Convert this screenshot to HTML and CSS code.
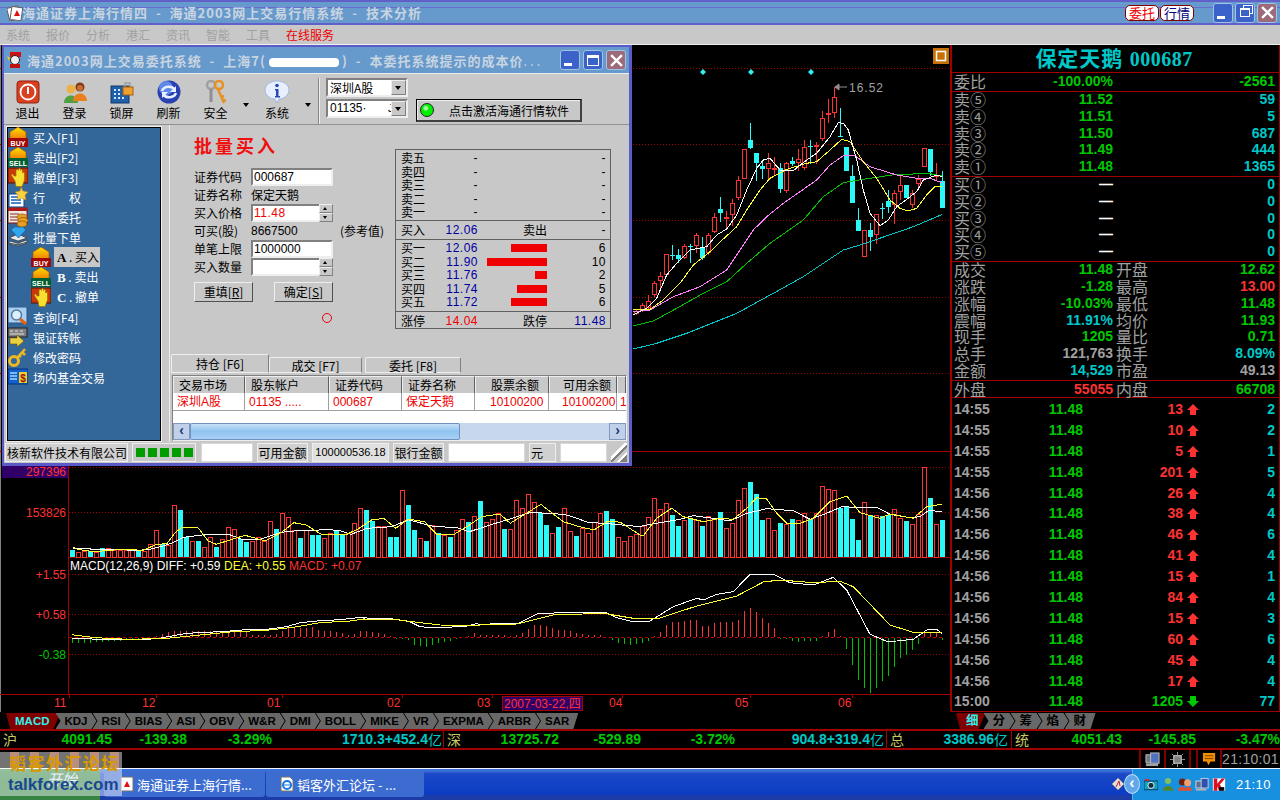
FILE: index.html
```html
<!DOCTYPE html>
<html lang="zh">
<head>
<meta charset="utf-8">
<title>海通证券上海行情四</title>
<link rel="stylesheet" href="styles.css">
</head>
<body>
<svg class="defs" width="0" height="0">
  <defs>
    <symbol id="ar-up" viewBox="0 0 12 11"><path d="M6 0L12 6H9V11H3V6H0z"/></symbol>
    <symbol id="ar-dn" viewBox="0 0 12 11"><path d="M6 11L12 5H9V0H3V5H0z"/></symbol>
    <linearGradient id="gold" x1="0" y1="0" x2="0" y2="1"><stop offset="0" stop-color="#ffe000"/><stop offset="1" stop-color="#f07800"/></linearGradient>
    <symbol id="i-buy" viewBox="0 0 20 20"><path d="M10 0L18 5V13H2V5z" fill="url(#gold)" stroke="#a05000" stroke-width=".6"/><rect y="11" width="20" height="9" fill="#a00808"/><text x="10" y="18.6" class="ictext">BUY</text></symbol>
    <symbol id="i-sell" viewBox="0 0 20 20"><path d="M10 0L18 5V13H2V5z" fill="url(#gold)" stroke="#a05000" stroke-width=".6"/><rect y="11" width="20" height="9" fill="#006030"/><text x="10" y="18.6" class="ictext">SELL</text></symbol>
    <symbol id="i-hand" viewBox="0 0 20 20"><rect y="1" width="20" height="15" fill="#c83808" stroke="#501000"/><path d="M6 9C5 6.500 3 6.500 3.500 8.500L7 14L8 19.500H14L16.500 13V6C16.500 5 14.500 5 14.500 6V3.500C14.500 2 12.500 2 12.500 3.500V2.500C12.500 1 10.500 1 10.500 2.500V3.500C10.500 2 8 2 8 3.500V9z" fill="#f8e030" stroke="#a07000" stroke-width=".7"/></symbol>
    <symbol id="i-star" viewBox="0 0 20 20"><rect x="1" y="7" width="15" height="13" fill="#fff" stroke="#104090"/><path d="M3 10h8M3 13h10M3 16h10" stroke="#1060c0" stroke-width="1.500"/><path d="M13 0l2 4 5 1-3 3 1 5-5-2-4 2 1-5-3-3 5-1z" fill="#f8d040" stroke="#c08000" stroke-width=".5"/></symbol>
    <symbol id="i-mkt" viewBox="0 0 20 20"><rect y="1" width="19" height="15" fill="#f0e8e0" stroke="#801010"/><rect y="1" width="19" height="3" fill="#b01818"/><path d="M2 7h9M2 10h7M2 13h8" stroke="#803020"/><ellipse cx="14" cy="10" rx="5" ry="3" fill="#e8a020" stroke="#905000" stroke-width=".7"/><ellipse cx="15" cy="13.500" rx="5" ry="3" fill="#e8a020" stroke="#905000" stroke-width=".7"/><ellipse cx="14" cy="17" rx="5" ry="3" fill="#e8a020" stroke="#905000" stroke-width=".7"/></symbol>
    <symbol id="i-batch" viewBox="0 0 20 20"><path d="M1 11l9-4 9 4-9 3zM1 14l9 2 9-3v2l-9 3-9-2zM1 17l9 2 9-3" fill="#e8e8e8" stroke="#303030" stroke-width=".7"/><path d="M6 0h9l3 3-7.500 8L3 3z" fill="#30a8f0" stroke="#0848a0" stroke-width=".6"/></symbol>
    <symbol id="i-find" viewBox="0 0 20 20"><rect width="19" height="16" fill="#a8d0f0" stroke="#305080"/><circle cx="8.500" cy="8" r="5" fill="#d8f0ff" stroke="#5878a0" stroke-width="1.500"/><path d="M12 12l6 5" stroke="#e86010" stroke-width="3"/></symbol>
    <symbol id="i-bank" viewBox="0 0 20 20"><rect y="1" width="19" height="9" fill="#808080" stroke="#202020"/><path d="M2 4h3M7 4h3M12 4h3M2 7h14" stroke="#e0e0e0"/><path d="M2 11h7V8l7 6-7 6v-3H2z" fill="#e8d040" stroke="#705000" stroke-width=".6"/></symbol>
    <symbol id="i-key" viewBox="0 0 20 20"><circle cx="6" cy="14" r="4.500" fill="none" stroke="#f0b820" stroke-width="3"/><path d="M9 11l8-9M14 5l3 3M11 8l2 2" stroke="#f0b820" stroke-width="2.500" fill="none"/></symbol>
    <symbol id="i-fund" viewBox="0 0 20 20"><rect y="2" width="20" height="15" fill="#1060d0" stroke="#083080"/><path d="M2 6h7M2 9h7M2 12h7" stroke="#a0d8ff" stroke-width="1.500"/><rect x="11" y="5" width="8" height="11" fill="#f0d020"/><text x="15" y="14.500" class="ictext2">$</text></symbol>
  </defs>
</svg>

<header class="titlebar">
  <svg class="appicon" viewBox="0 0 16 16"><rect x="1" y="2" width="11" height="13" rx="1" transform="rotate(-14 6 8)" fill="#fff" stroke="#606060"/><rect x="4" y="2" width="11" height="13" rx="1" transform="rotate(8 9 8)" fill="#fff" stroke="#606060"/><path d="M10 5l3 6H7z" fill="#e01010"/></svg>
  <span class="title-text">海通证券上海行情四  -  海通2003网上交易行情系统  -  技术分析</span>
  <span class="pill pill-red">委托</span>
  <span class="pill pill-blue">行情</span>
  <span class="wbtns">
    <span class="wbtn"><i class="g-min"></i></span>
    <span class="wbtn"><i class="g-rest"></i></span>
    <span class="wbtn wclose"><svg viewBox="0 0 12 12"><path d="M1 1l10 10M11 1L1 11" stroke="#fff" stroke-width="2.200"/></svg></span>
  </span>
</header>

<nav class="menubar">
  <span>系统</span><span>报价</span><span>分析</span><span>港汇</span><span>资讯</span><span>智能</span><span>工具</span><span class="online">在线服务</span>
</nav>

<main class="workspace">
  <svg id="chart" class="chart" width="951" height="667" viewBox="0 45 951 667">
    <g class="dots">
      <path d="M0 68.500H950M0 144.500H950M0 220.500H950M0 297.500H950M0 373.500H950"/>
      <path d="M69 467.500H950M69 512.500H950M69 574.500H950M69 614.500H950M69 654.500H950"/>
    </g>
    <path class="zero" d="M69 637.500H944"/>
    <path class="frame" d="M0 451.500H950M68.500 451V694.500M69 557.500H950M0 694.500H950M950.500 45V711"/>
    <path class="frame" d="M950 78h2M950 91h2M950 176h2M950 261h2M950 276h2M950 283h2M950 290h2M950 320h2"/>
    <path class="frame" d="M69.500 694v4M156.500 694v4M282.500 694v4M402.500 694v4M492.500 694v4M622.500 694v4M750.500 694v4M852.500 694v4"/>
    <g id="c-macd"></g>
    <g id="c-vol"></g>
    <g id="c-price"></g>
    <path class="diamond" d="M703 69l3 3-3 3-3-3zM751 69l3 3-3 3-3-3zM811 69l3 3-3 3-3-3z"/>
    <path class="peak" d="M835 87h12M835 87l4-3v6z"/>
    <text class="tx tx-gray peak-t" x="849" y="91.500">16.52</text>
    <rect class="ob" x="933" y="48" width="16" height="16"/>
    <rect class="ob-in" x="936.500" y="51.500" width="9" height="9"/>
    <rect class="vbox" x="2" y="465" width="66" height="13"/>
    <text class="tx tx-red" x="66" y="476" text-anchor="end">297396</text>
    <text class="tx tx-red" x="66" y="517" text-anchor="end">153826</text>
    <text class="tx tx-red" x="66" y="579" text-anchor="end">+1.55</text>
    <text class="tx tx-red" x="66" y="619" text-anchor="end">+0.58</text>
    <text class="tx tx-green" x="66" y="659" text-anchor="end">-0.38</text>
    <text class="tx" x="70" y="570"><tspan class="s-w">MACD(12,26,9) DIFF: +0.59</tspan><tspan class="s-y" x="224">DEA: +0.55</tspan><tspan class="s-r" x="289">MACD: +0.07</tspan></text>
    <text class="tx tx-red" x="54" y="707">11</text>
    <text class="tx tx-red" x="142" y="707">12</text>
    <text class="tx tx-red" x="267" y="707">01</text>
    <text class="tx tx-red" x="387" y="707">02</text>
    <text class="tx tx-red" x="477" y="707">03</text>
    <rect class="dbox" x="502.500" y="696.500" width="80" height="14"/>
    <text class="tx tx-red" x="504" y="707.500">2007-03-22,四</text>
    <text class="tx tx-red" x="609" y="707">04</text>
    <text class="tx tx-red" x="735" y="707">05</text>
    <text class="tx tx-red" x="838" y="707">06</text>
  </svg>

  <aside class="quote">
    <h1 class="q-title">保定天鹅 <span>000687</span></h1>
    <section class="q-sec q-s1">
      <div class="q-row q-top"><span class="cell"><b>委比</b><em class="gr">-100.00%</em></span><span class="cell end"><em class="gr">-2561</em></span></div>
    </section>
    <section class="q-sec q-s5">
      <div class="q-row"><span class="cell"><b>卖⑤</b><em class="gr">11.52</em></span><span class="cell end"><em class="cy">59</em></span></div>
      <div class="q-row"><span class="cell"><b>卖④</b><em class="gr">11.51</em></span><span class="cell end"><em class="cy">5</em></span></div>
      <div class="q-row"><span class="cell"><b>卖③</b><em class="gr">11.50</em></span><span class="cell end"><em class="cy">687</em></span></div>
      <div class="q-row"><span class="cell"><b>卖②</b><em class="gr">11.49</em></span><span class="cell end"><em class="cy">444</em></span></div>
      <div class="q-row"><span class="cell"><b>卖①</b><em class="gr">11.48</em></span><span class="cell end"><em class="cy">1365</em></span></div>
    </section>
    <section class="q-sec q-s5">
      <div class="q-row"><span class="cell"><b>买①</b><em class="wh">—</em></span><span class="cell end"><em class="cy">0</em></span></div>
      <div class="q-row"><span class="cell"><b>买②</b><em class="wh">—</em></span><span class="cell end"><em class="cy">0</em></span></div>
      <div class="q-row"><span class="cell"><b>买③</b><em class="wh">—</em></span><span class="cell end"><em class="cy">0</em></span></div>
      <div class="q-row"><span class="cell"><b>买④</b><em class="wh">—</em></span><span class="cell end"><em class="cy">0</em></span></div>
      <div class="q-row"><span class="cell"><b>买⑤</b><em class="wh">—</em></span><span class="cell end"><em class="cy">0</em></span></div>
    </section>
    <section class="q-sec q-s7">
      <div class="q-row"><span class="cell"><b>成交</b><em class="gr">11.48</em></span><span class="cell"><b>开盘</b><em class="gr">12.62</em></span></div>
      <div class="q-row"><span class="cell"><b>涨跌</b><em class="gr">-1.28</em></span><span class="cell"><b>最高</b><em class="rd">13.00</em></span></div>
      <div class="q-row"><span class="cell"><b>涨幅</b><em class="gr">-10.03%</em></span><span class="cell"><b>最低</b><em class="gr">11.48</em></span></div>
      <div class="q-row"><span class="cell"><b>震幅</b><em class="cy">11.91%</em></span><span class="cell"><b>均价</b><em class="gr">11.93</em></span></div>
      <div class="q-row"><span class="cell"><b>现手</b><em class="gr">1205</em></span><span class="cell"><b>量比</b><em class="gr">0.71</em></span></div>
      <div class="q-row"><span class="cell"><b>总手</b><em class="gy">121,763</em></span><span class="cell"><b>换手</b><em class="cy">8.09%</em></span></div>
      <div class="q-row"><span class="cell"><b>金额</b><em class="cy">14,529</em></span><span class="cell"><b>市盈</b><em class="gy">49.13</em></span></div>
    </section>
    <section class="q-sec q-s1b">
      <div class="q-row"><span class="cell"><b>外盘</b><em class="rd">55055</em></span><span class="cell"><b>内盘</b><em class="gr">66708</em></span></div>
    </section>
    <section class="ticks">
      <div class="tick"><span class="gy">14:55</span><span class="gr">11.48</span><span class="rd">13</span><svg class="arw rd"><use href="#ar-up"/></svg><span class="cy">2</span></div>
      <div class="tick"><span class="gy">14:55</span><span class="gr">11.48</span><span class="rd">10</span><svg class="arw rd"><use href="#ar-up"/></svg><span class="cy">2</span></div>
      <div class="tick"><span class="gy">14:55</span><span class="gr">11.48</span><span class="rd">5</span><svg class="arw rd"><use href="#ar-up"/></svg><span class="cy">1</span></div>
      <div class="tick"><span class="gy">14:55</span><span class="gr">11.48</span><span class="rd">201</span><svg class="arw rd"><use href="#ar-up"/></svg><span class="cy">5</span></div>
      <div class="tick"><span class="gy">14:56</span><span class="gr">11.48</span><span class="rd">26</span><svg class="arw rd"><use href="#ar-up"/></svg><span class="cy">4</span></div>
      <div class="tick"><span class="gy">14:56</span><span class="gr">11.48</span><span class="rd">38</span><svg class="arw rd"><use href="#ar-up"/></svg><span class="cy">4</span></div>
      <div class="tick"><span class="gy">14:56</span><span class="gr">11.48</span><span class="rd">46</span><svg class="arw rd"><use href="#ar-up"/></svg><span class="cy">6</span></div>
      <div class="tick"><span class="gy">14:56</span><span class="gr">11.48</span><span class="rd">41</span><svg class="arw rd"><use href="#ar-up"/></svg><span class="cy">4</span></div>
      <div class="tick"><span class="gy">14:56</span><span class="gr">11.48</span><span class="rd">15</span><svg class="arw rd"><use href="#ar-up"/></svg><span class="cy">1</span></div>
      <div class="tick"><span class="gy">14:56</span><span class="gr">11.48</span><span class="rd">84</span><svg class="arw rd"><use href="#ar-up"/></svg><span class="cy">4</span></div>
      <div class="tick"><span class="gy">14:56</span><span class="gr">11.48</span><span class="rd">15</span><svg class="arw rd"><use href="#ar-up"/></svg><span class="cy">3</span></div>
      <div class="tick"><span class="gy">14:56</span><span class="gr">11.48</span><span class="rd">60</span><svg class="arw rd"><use href="#ar-up"/></svg><span class="cy">6</span></div>
      <div class="tick"><span class="gy">14:56</span><span class="gr">11.48</span><span class="rd">45</span><svg class="arw rd"><use href="#ar-up"/></svg><span class="cy">4</span></div>
      <div class="tick"><span class="gy">14:56</span><span class="gr">11.48</span><span class="rd">17</span><svg class="arw rd"><use href="#ar-up"/></svg><span class="cy">4</span></div>
      <div class="tick"><span class="gy">15:00</span><span class="gr">11.48</span><span class="gr">1205</span><svg class="arw gr"><use href="#ar-dn"/></svg><span class="cy">77</span></div>
    </section>
  </aside>
</main>

<div class="tabrow">
  <div class="tabs tabs-left">
    <span class="tab on">MACD</span><span class="tab">KDJ</span><span class="tab">RSI</span><span class="tab">BIAS</span><span class="tab">ASI</span><span class="tab">OBV</span><span class="tab">W&amp;R</span><span class="tab">DMI</span><span class="tab">BOLL</span><span class="tab">MIKE</span><span class="tab">VR</span><span class="tab">EXPMA</span><span class="tab">ARBR</span><span class="tab last">SAR</span>
  </div>
  <div class="tabs tabs-right">
    <span class="tab on">细</span><span class="tab">分</span><span class="tab">筹</span><span class="tab">焰</span><span class="tab last">财</span>
  </div>
</div>

<div class="indexbar">
  <div class="ix ix1"><b>沪</b><span class="gr v1">4091.45</span><span class="gr v2">-139.38</span><span class="gr v3">-3.29%</span><span class="cy v4">1710.3+452.4</span><i>亿</i></div>
  <div class="ix ix2"><b>深</b><span class="gr v1">13725.72</span><span class="gr v2">-529.89</span><span class="gr v3">-3.72%</span><span class="cy v4">904.8+319.4</span><i>亿</i></div>
  <div class="ix ix3"><b>总</b><span class="cy v4">3386.96</span><i>亿</i></div>
  <div class="ix ix4"><b>统</b><span class="gr v1">4051.43</span><span class="gr v2">-145.85</span><span class="gr v3">-3.47%</span></div>
</div>

<div class="statusrow">
  <span class="st st-a"><svg viewBox="0 0 16 16"><rect x="1" y="3" width="9" height="8" fill="#707880" stroke="#c0c0c0"/><rect x="6" y="1" width="9" height="11" fill="#5070c0" stroke="#c0c0c0"/><rect x="1" y="12" width="13" height="3" fill="#a0a0a0"/></svg></span>
  <span class="st st-b"><svg viewBox="0 0 16 16"><rect x="4" y="4" width="8" height="8" fill="#808080" stroke="#e0e0e0"/><path d="M2 2l2 2M14 2l-2 2M2 14l2-2M14 14l-2-2M8 0v3M8 13v3M0 8h3M13 8h3" stroke="#a0a0a0"/></svg></span>
  <span class="st st-c"></span>
  <span class="st st-d"><svg viewBox="0 0 16 16"><path d="M1 1h13v9H9l-2 4-2-4H1z" fill="#f09000"/><path d="M3 4h9M3 7h9" stroke="#804000"/></svg></span>
  <span class="st st-e">21:10:01</span>
</div>

<footer class="taskbar">
  <span class="start">开始</span>
  <span class="task"><svg viewBox="0 0 14 16"><rect x="1" y="1" width="12" height="14" fill="#fff" stroke="#707070"/><path d="M7 5l3 6H4z" fill="#e01010"/></svg>海通证券上海行情...</span>
  <span class="task task2"><svg viewBox="0 0 14 16"><path d="M1 1h9l3 3v11H1z" fill="#fff" stroke="#707070"/><circle cx="7" cy="9" r="4" fill="none" stroke="#1878e0" stroke-width="2"/><path d="M3 9h7" stroke="#1878e0"/></svg>韬客外汇论坛 - ...</span>
  <span class="tray-pre"><svg viewBox="0 0 14 14"><path d="M7 1l6 6-6 6-6-6z" fill="#e0e0e0" stroke="#909090"/><path d="M5 10l3-6 1 5" stroke="#d02020" fill="none"/></svg></span>
  <span class="tray-arrow">‹</span>
  <span class="tray">
    <svg viewBox="0 0 16 14"><rect y="3" width="16" height="10" fill="#18a0c0" stroke="#003050"/><circle cx="8" cy="8" r="3.500" fill="#103040" stroke="#fff"/><rect x="1" y="1" width="5" height="2" fill="#e02020"/></svg>
    <svg viewBox="0 0 16 16"><circle cx="8" cy="4" r="3.500" fill="#80c060"/><path d="M2 15c0-7 12-7 12 0z" fill="#508830"/></svg>
    <svg viewBox="0 0 16 16"><circle cx="5" cy="5" r="4" fill="#702010"/><circle cx="11" cy="6" r="4" fill="#f0a070"/><path d="M0 15c0-6 9-6 9 0zM7 15c0-6 9-6 9 0z" fill="#e05030"/></svg>
    <svg viewBox="0 0 16 16"><rect x="1" y="4" width="8" height="8" fill="#607090" stroke="#d0d8e0"/><rect x="7" y="1" width="8" height="11" fill="#3050b0" stroke="#d0d8e0"/><rect x="1" y="13" width="12" height="2" fill="#b0b0b0"/></svg>
    <svg viewBox="0 0 16 16"><rect x="1" y="1" width="14" height="14" fill="#fff"/><path d="M2 1h4v6l5-6h4l-6 7 4 7H8L6 10v5H2z" fill="#e01020"/><path d="M8 11h6v4H8z" fill="#000"/></svg>
    <span class="clock">21:10</span>
  </span>
</footer>

<div class="watermark">
  <span class="wm-cn">韬客外汇论坛</span>
  <span class="wm-en">talkforex.com</span>
</div>

<section class="dialog">
  <div class="d-title">
    <svg class="d-icon" viewBox="0 0 16 18"><rect x="3" y="1" width="11" height="5" fill="#d01010"/><circle cx="8" cy="9" r="4.500" fill="#f0f0f0" stroke="#202020"/><rect x="3" y="13" width="10" height="4" fill="#c01010"/><path d="M0 5l3 2-1 3z" fill="#f8d000"/></svg>
    <span class="d-title-text">海通2003网上交易委托系统  -  上海7(<i class="mask"></i>)  -  本委托系统提示的成本价<i class="ell">...</i></span>
    <span class="wbtns d-btns">
      <span class="wbtn"><i class="g-min"></i></span>
      <span class="wbtn"><i class="g-max"></i></span>
      <span class="wbtn wclose"><svg viewBox="0 0 12 12"><path d="M1 1l10 10M11 1L1 11" stroke="#fff" stroke-width="2.200"/></svg></span>
    </span>
  </div>

  <div class="toolbar">
    <div class="tool"><svg viewBox="0 0 24 24"><rect x="1" y="1" width="22" height="22" rx="3" fill="#d84020" stroke="#902010"/><circle cx="12" cy="12" r="7.500" fill="none" stroke="#fff" stroke-width="1.800"/><rect x="11" y="7" width="2" height="7" fill="#fff"/></svg><span>退出</span></div>
    <div class="tool"><svg viewBox="0 0 24 24"><circle cx="8" cy="9" r="4.500" fill="#f0b048"/><path d="M1 23c0-10 14-10 14 0z" fill="#50a040"/><circle cx="17" cy="7" r="4.500" fill="#803818"/><circle cx="17" cy="8" r="3" fill="#c87030"/><path d="M10 21c0-10 14-10 14 0z" fill="#e88020"/></svg><span>登录</span></div>
    <div class="tool"><svg viewBox="0 0 24 24"><rect x="1" y="6" width="18" height="17" fill="#2060a8" stroke="#103868"/><path d="M4 10h2M8 10h2M4 14h2M8 14h2M4 18h2M8 18h2M12 18h2" stroke="#d0e8ff" stroke-width="2"/><path d="M15 7V3h5v4" fill="none" stroke="#a0a0a0" stroke-width="1.500"/><rect x="13" y="7" width="10" height="8" fill="#f0a030" stroke="#a06010"/></svg><span>锁屏</span></div>
    <div class="tool"><svg viewBox="0 0 24 24"><circle cx="12" cy="12" r="11.500" fill="#2840b0"/><circle cx="9" cy="8" r="7" fill="#6088e8"/><path d="M5 11c2-5 10-6 13-1M19 13c-2 5-10 6-13 1" fill="none" stroke="#e8f0ff" stroke-width="2.500"/><path d="M19 6v6h-6zM5 18v-6h6z" fill="#e8f0ff"/></svg><span>刷新</span></div>
    <div class="tool"><svg viewBox="0 0 24 24"><circle cx="7" cy="5" r="4" fill="none" stroke="#a0a0a0" stroke-width="2.500"/><path d="M7 9v13" stroke="#909090" stroke-width="3"/><circle cx="15" cy="5" r="4" fill="none" stroke="#e89020" stroke-width="2.500"/><path d="M14 9l6 14M17 17l3-1M19 21l3-1" stroke="#e89020" stroke-width="2.500"/></svg><span>安全</span></div>
    <i class="caret"></i>
    <div class="tool tool-sys"><svg viewBox="0 0 26 24"><path d="M13 1C20 1 25 5 25 10S20 19 15 19l-2 4-2-4C6 19 1 15 1 10S6 1 13 1z" fill="#e8f0ff" stroke="#a0b8e0"/><circle cx="13" cy="5.500" r="1.800" fill="#2848b8"/><path d="M11 9h3.500v7H16v1.500h-5V16h1V10.500h-1z" fill="#2848b8"/></svg><span>系统</span></div>
    <i class="caret"></i>
    <i class="vsep"></i>
    <div class="combos">
      <div class="combo"><span>深圳A股</span><i class="drop"></i></div>
      <div class="combo combo-num"><span>01135·</span><span class="j">J</span><i class="drop"></i></div>
    </div>
    <div class="activate"><i class="led"></i><span>点击激活海通行情软件</span></div>
  </div>

  <div class="d-body">
    <div class="sidenav">
      <div class="nv"><svg><use href="#i-buy"/></svg><span>买入[F1]</span></div>
      <div class="nv"><svg><use href="#i-sell"/></svg><span>卖出[F2]</span></div>
      <div class="nv"><svg><use href="#i-hand"/></svg><span>撤单[F3]</span></div>
      <div class="nv"><svg><use href="#i-star"/></svg><span>行&emsp;&emsp;权</span></div>
      <div class="nv"><svg><use href="#i-mkt"/></svg><span>市价委托</span></div>
      <div class="nv"><svg><use href="#i-batch"/></svg><span>批量下单</span></div>
      <div class="nv sub sel"><svg><use href="#i-buy"/></svg><span><u>A</u> . 买入</span></div>
      <div class="nv sub"><svg><use href="#i-sell"/></svg><span><u>B</u> . 卖出</span></div>
      <div class="nv sub"><svg><use href="#i-hand"/></svg><span><u>C</u> . 撤单</span></div>
      <div class="nv"><svg><use href="#i-find"/></svg><span>查询[F4]</span></div>
      <div class="nv"><svg><use href="#i-bank"/></svg><span>银证转帐</span></div>
      <div class="nv"><svg><use href="#i-key"/></svg><span>修改密码</span></div>
      <div class="nv"><svg><use href="#i-fund"/></svg><span>场内基金交易</span></div>
    </div>

    <div class="panel">
      <div class="trade">
        <div class="form">
          <h2 class="f-title">批量买入</h2>
          <div class="f-row"><label>证券代码</label><span class="inp">000687</span></div>
          <div class="f-row"><label>证券名称</label><span class="ro">保定天鹅</span></div>
          <div class="f-row"><label>买入价格</label><span class="inp red spin"><span>11.48</span><i class="sp"><i></i><i></i></i></span></div>
          <div class="f-row"><label>可买(股)</label><span class="ro num">8667500</span><span class="ref">(参考值)</span></div>
          <div class="f-row"><label>单笔上限</label><span class="inp">1000000</span></div>
          <div class="f-row"><label>买入数量</label><span class="inp spin"><span></span><i class="sp"><i></i><i></i></i></span></div>
          <div class="f-btns"><span class="btn">重填[<u>R</u>]</span><span class="btn">确定[<u>S</u>]</span></div>
          <i class="ring"></i>
        </div>
        <div class="book">
          <div class="bk-sec">
            <div class="bk"><span>卖五</span><span class="p">-</span><span></span><span class="n">-</span></div>
            <div class="bk"><span>卖四</span><span class="p">-</span><span></span><span class="n">-</span></div>
            <div class="bk"><span>卖三</span><span class="p">-</span><span></span><span class="n">-</span></div>
            <div class="bk"><span>卖二</span><span class="p">-</span><span></span><span class="n">-</span></div>
            <div class="bk"><span>卖一</span><span class="p">-</span><span></span><span class="n">-</span></div>
          </div>
          <div class="bk-sec bk-one">
            <div class="bk"><span>买入</span><span class="p blue">12.06</span><span class="mid">卖出</span><span class="n">-</span></div>
          </div>
          <div class="bk-sec">
            <div class="bk"><span>买一</span><span class="p blue">12.06</span><span class="bar b6"></span><span class="n">6</span></div>
            <div class="bk"><span>买二</span><span class="p blue">11.90</span><span class="bar b10"></span><span class="n">10</span></div>
            <div class="bk"><span>买三</span><span class="p blue">11.76</span><span class="bar b2"></span><span class="n">2</span></div>
            <div class="bk"><span>买四</span><span class="p blue">11.74</span><span class="bar b5"></span><span class="n">5</span></div>
            <div class="bk"><span>买五</span><span class="p blue">11.72</span><span class="bar b6"></span><span class="n">6</span></div>
          </div>
          <div class="bk-sec bk-one bk-last">
            <div class="bk"><span>涨停</span><span class="p redt">14.04</span><span class="mid">跌停</span><span class="n blue">11.48</span></div>
          </div>
        </div>
      </div>

      <div class="dtabs">
        <span class="dtab on">持仓 [F6]</span><span class="dtab t2">成交 [F7]</span><span class="dtab t3">委托 [F8]</span>
      </div>
      <div class="dtable">
        <div class="t-head"><span>交易市场</span><span>股东帐户</span><span>证券代码</span><span>证券名称</span><span>股票余额</span><span>可用余额</span><span></span></div>
        <div class="t-row"><span>深圳A股</span><span>01135 .....</span><span>000687</span><span>保定天鹅</span><span>10100200</span><span>10100200</span><span>1</span></div>
        <div class="t-fill"></div>
        <div class="hscroll"><i class="sb-btn">‹</i><i class="sb-thumb"><i></i></i><i class="sb-btn">›</i></div>
      </div>
    </div>
  </div>

  <div class="d-status">
    <span class="sc txt">核新软件技术有限公司</span>
    <span class="sc leds"><i></i><i></i><i></i><i></i><i></i></span>
    <span class="sc blank"></span>
    <span class="sc txt ctr">可用金额</span>
    <span class="sc txt ctr amt">100000536.18</span>
    <span class="sc txt ctr">银行金额</span>
    <span class="sc blank"></span>
    <span class="sc txt">元</span>
    <span class="sc blank"></span>
    <span class="grip"></span>
  </div>
</section>

<script src="chart.js"></script>
</body>
</html>
```
FILE: styles.css
```css
* { box-sizing: border-box; }
html, body { margin: 0; padding: 0; }
body {
  width: 1280px; height: 800px; overflow: hidden; background: #000;
  display: flex; flex-direction: column; position: relative;
  font-family: "Noto Sans CJK SC", "Liberation Sans", sans-serif; font-size: 12px;
}
i, em, b, u { font-style: normal; font-weight: normal; }
.defs { position: absolute; }
.ictext { font: bold 7px "Liberation Sans", sans-serif; fill: #fff; text-anchor: middle; }
.ictext2 { font: bold 10px "Liberation Sans", sans-serif; fill: #a01010; text-anchor: middle; }

/* app title */
.titlebar {
  height: 25px; flex: none; display: flex; align-items: center; padding: 0 3px 0 7px;
  background: linear-gradient(#6060c8 0 2px, #6699cc 2px 7px, #6a6ad0 7px 8px, #6699cc 8px 23px, #6060c8 23px);
}
.appicon { width: 16px; height: 16px; }
.title-text { margin-left: -1px; white-space: pre; font-size: 13px; font-weight: 700; letter-spacing: 1px; color: #c8d4e0; line-height: 25px; flex: 1; padding-left: 0; }
.pill { width: 34px; height: 16px; margin-right: 1px; border: 1px solid #800000; border-radius: 5px; background: #fff; font-size: 13px; line-height: 14px; text-align: center; }
.pill-red { color: #f00000; }
.pill-blue { color: #000080; }
.wbtns { display: flex; gap: 2px; margin-left: 18px; }
.wbtn { width: 20px; height: 20px; border-radius: 3px; background: #3a62c8; border: 1px solid #a0c4e8; display: flex; align-items: center; justify-content: center; position: relative; }
.wclose { background: #9c6a78; }
.wclose svg { width: 13px; height: 13px; }
.g-min { width: 8px; height: 3px; background: #fff; margin-top: 9px; margin-right: 4px; }
.g-rest { width: 10px; height: 9px; border: 1px solid #fff; border-top-width: 2px; box-shadow: 3px -3px 0 -1px #3a62c8, 3px -3px 0 0 #fff; }
.g-max { width: 12px; height: 11px; border: 1px solid #fff; border-top-width: 3px; }

/* menu */
.menubar { height: 20px; flex: none; background: #c8c8c8; border-bottom: 1px solid #eee; display: flex; padding-left: 6px; line-height: 19px; color: #a0a0a0; font-size: 12px; }
.menubar span { width: 40px; }
.menubar .online { color: #f00000; width: auto; }

/* workspace */
.workspace { height: 667px; flex: none; display: flex; border-left: 1px solid #808080; }
.chart { display: block; flex: none; margin-left: -1px; }
.dots path { stroke: #a00000; stroke-dasharray: 1 2; fill: none; }
.zero { stroke: #c00000; stroke-dasharray: 3 3; fill: none; }
.frame { stroke: #a00000; fill: none; shape-rendering: crispEdges; }
.diamond { fill: #30f0f0; }
.peak { stroke: #909090; fill: #909090; }
.tx { font: 12px "Liberation Sans", "Noto Sans CJK SC", sans-serif; fill: #fff; }
.tx-red { fill: #ff3232; }
.tx-green { fill: #00c800; }
.tx-gray { fill: #a0a0a0; }
.peak-t { font-size: 12px; letter-spacing: 1px; }
.s-w { fill: #fff; }
.s-y { fill: #ffff30; }
.s-r { fill: #ff3232; }
.ob { fill: #c87000; }
.ob-in { fill: none; stroke: #fff; stroke-width: 1.500; }
.vbox { fill: #300068; }
.dbox { fill: #300068; stroke: #a00000; }

/* quote */
.quote { flex: 1; min-width: 0; border-left: 1px solid #a00000; border-right: 1px solid #a00000; border-bottom: 1px solid #a00000; padding: 0; overflow: hidden; }
.q-title { margin: 0; height: 27px; font: 700 21px/28px "Liberation Serif", "Noto Sans CJK SC", serif; color: #00c8c8; text-align: center; padding-right: 3px; letter-spacing: 1px; white-space: nowrap; }
.q-title span { font-size: 20px; letter-spacing: .5px; }
.q-sec { border-top: 1px solid #a00000; display: flex; flex-direction: column; }
.q-s1 { height: 19px; }
.q-s5 { height: 85px; }
.q-s7 { height: 119px; }
.q-s1b { height: 17px; }
.q-row { flex: 1; min-height: 0; display: grid; grid-template-columns: 159px 159px; column-gap: 3px; padding-left: 2px; line-height: 15px; }
.q-row.q-top { line-height: 17px; }
.q-s1b .q-row { line-height: 16px; }
.cell { display: flex; justify-content: space-between; white-space: nowrap; }
.cell.end { justify-content: flex-end; }
.cell b { font-size: 16px; color: #a0a0a0; font-weight: 400; letter-spacing: 0; }
.cell em, .tick span { font: 700 14px "Liberation Sans", sans-serif; line-height: inherit; }
.gr { color: #00c800; }
.cy { color: #00c8c8; }
.rd { color: #ff3232; }
.gy { color: #a0a0a0; }
.wh { color: #fff; }
.ticks { border-top: 1px solid #a00000; height: 314px; padding: 1px 0 0 2px; display: flex; flex-direction: column; }
.tick { height: 20.900px; flex: none; line-height: 21px; display: grid; grid-template-columns: 40px 89px 100px 16px 76px; align-items: center; }
.tick span { text-align: right; }
.tick span:first-child { text-align: left; }
.arw { width: 12px; height: 11px; margin-left: 4px; fill: currentColor; }

/* indicator tabs */
.tabrow { height: 17px; flex: none; display: flex; }
.tabs { display: flex; }
.tabs-left { width: 951px; padding-left: 6px; }
.tabs-right { padding-left: 5px; }
.tab {
  height: 16px; padding: 0 9px; margin-right: -4px; margin-top: 1px;
  background: #686868; color: #000; font: 700 11.500px/16px "Liberation Sans", "Noto Sans CJK SC", sans-serif; white-space: nowrap;
  clip-path: polygon(0 0, calc(100% - 5px) 0, 100% 50%, calc(100% - 5px) 100%, 0 100%, 5px 50%);
}
.tab.last { clip-path: polygon(0 0, 100% 0, calc(100% - 5px) 100%, 0 100%, 5px 50%); }
.tab.on { background: #800000; color: #30f0f0; padding: 0 11px 0 9px; margin-right: -5px; clip-path: polygon(0 0, 100% 0, calc(100% - 7px) 100%, 4px 100%); }
.tabs-right .tab { font-size: 12.500px; padding: 0 9.500px 0 9px; }
.tabs-right .tab.on { padding: 0 7px 0 10px; margin-right: -2px; }

/* indices */
.indexbar { height: 21px; flex: none; display: flex; border-top: 2px solid #a00000; border-bottom: 2px solid #a00000; }
.ix { position: relative; height: 17px; border-right: 1px solid #a00000; display: grid; line-height: 17px; white-space: nowrap; padding-left: 3px; }
.ix b { font-size: 14px; color: #c8c864; width: 17px; }
.ix span { font: 700 14px "Liberation Sans", sans-serif; text-align: right; line-height: 17px; }
.ix i { font-size: 14px; color: #00c8c8; line-height: 17px; }
.ix1 { width: 444px; grid-template-columns: 17px 92px 75px 85px auto 15px; }
.ix2 { width: 443px; grid-template-columns: 17px 95px 82px 94px 135px 16px; }
.ix3 { width: 125px; grid-template-columns: 17px 87px 15px; }
.ix4 { width: 268px; grid-template-columns: 17px 90px 74px 84px; border-right: 0; }

/* status */
.statusrow { height: 18px; flex: none; display: flex; justify-content: flex-end; padding-right: 1px; }
.st { border-left: 2px solid #800000; display: flex; align-items: center; justify-content: center; height: 18px; }
.st svg { width: 15px; height: 15px; }
.st-a { width: 25px; }
.st-b { width: 25px; }
.st-c { width: 7px; }
.st-d { width: 24px; }
.st-e { width: 59px; font: 14px "Liberation Sans", sans-serif; color: #a0a0a0; border-left-width: 2px; letter-spacing: .3px; }

/* taskbar */
.taskbar {
  height: 32px; flex: none; display: flex; align-items: center;
  background: linear-gradient(#f0f4ff 0 1px, #3a70d8 1px 3px, #1a48c8 6px, #0c3cc4 26px, #1c3ca8 28px);
}
.start { width: 100px; height: 31px; background: #3c9030; color: #fff; font-style: italic; font-size: 15px; line-height: 20px; padding-left: 47px; opacity: .85; }
.task { height: 26px; margin-left: 4px; width: 161px; background: #3c6cd0; border-radius: 3px; color: #fff; font-size: 13px; display: flex; align-items: center; gap: 3px; padding-left: 16px; white-space: nowrap; }
.task svg { width: 14px; height: 16px; flex: none; }
.task2 { margin-left: 1px; width: 158px; padding-left: 14px; }
.tray-pre { margin-left: auto; width: 14px; height: 14px; margin-right: 0; display: flex; }
.tray-arrow { width: 16px; height: 20px; border-radius: 50%; background: #60a8e8; border: 1px solid #c0dcf8; color: #fff; font: 700 16px/15px "Liberation Sans", sans-serif; text-align: center; margin-left: -1px; z-index: 1; }
.tray { width: 148px; height: 31px; margin-left: -8px; background: #1890e0; border-left: 1px solid #60b0e8; display: flex; align-items: center; gap: 3px; padding-left: 11px; color: #fff; align-self: flex-end; }
.tray svg { width: 14px; height: 15px; flex: none; }
.clock { font: 13px "Liberation Sans", sans-serif; margin-left: 7px; letter-spacing: .5px; }

/* watermark */
.watermark {
  position: absolute; left: 0; top: 752px; width: 122px; height: 44px;
  background: repeating-linear-gradient(90deg, rgba(255, 170, 140, .5) 0 9px, transparent 9px 20px) 10px 0 / 100% 16px no-repeat, rgba(255, 255, 255, .45);
  display: flex; flex-direction: column;
}
.wm-cn { font-size: 17px; line-height: 22px; font-weight: 700; color: #d89800; letter-spacing: 1.400px; padding-left: 9px; white-space: nowrap; }
.wm-en { font: 700 17px/22px "Liberation Sans", sans-serif; color: #184890; padding-left: 8px; }

/* dialog */
.dialog {
  position: absolute; left: 2px; top: 45px; width: 630px; height: 421px;
  border: 3px solid #5a5ac8; border-top-width: 2px; border-left-width: 2px;
  background: #c8c8c8; display: flex; flex-direction: column;
}
.d-title { height: 26px; flex: none; background: #6699cc; display: flex; align-items: center; padding: 0 0 0 3px; position: relative; }
.d-icon { width: 16px; height: 18px; flex: none; }
.d-title-text { margin-left: 4px; font-size: 13px; font-weight: 700; letter-spacing: 1px; color: #c8d4e0; white-space: pre; flex: 1; }
.ell { letter-spacing: 3px; }
.mask { display: inline-block; width: 70px; height: 9px; background: #fff; border-radius: 4px; vertical-align: -1px; margin: 0 3px; }
.d-btns { margin: 0; gap: 3px; padding-right: 3px; }

.toolbar { height: 52px; flex: none; display: flex; border-top: 1px solid #eee; border-bottom: 1px solid #909090; }
.tool { width: 47px; display: flex; flex-direction: column; align-items: center; padding-top: 6px; font-size: 12px; line-height: 16px; color: #000; }
.tool svg { width: 24px; height: 24px; flex: none; margin-bottom: 1px; }
.caret { width: 14px; height: 0; align-self: flex-start; margin-top: 29px; position: relative; }
.caret::after { content: ""; position: absolute; left: 4px; top: 0; border: 3px solid transparent; border-top: 4px solid #000; }
.tool-sys { width: 48px; }
.tool-sys svg { width: 26px; }
.caret:nth-of-type(2) { width: 12px; }
.vsep { width: 2px; margin-left: 5px; height: 46px; margin-top: 4px; border-left: 1px solid #888; border-right: 1px solid #eee; }
.combos { margin-left: 6px; padding-top: 4px; display: flex; flex-direction: column; gap: 2px; }
.combo { width: 82px; height: 19px; background: #fff; border: 2px solid; border-color: #808080 #eee #eee #808080; display: flex; align-items: center; font-size: 12px; line-height: 15px; padding-left: 2px; position: relative; color: #000; }
.combo span { flex: 1; }
.combo-num span:first-child { font-family: "Liberation Sans", sans-serif; }
.combo-num .j { flex: none; width: 5px; font-family: "Liberation Sans", sans-serif; font-size: 11px; margin-right: 13px; }
.drop { position: absolute; right: 0; top: 0; width: 15px; height: 15px; background: #c8c8c8; border: 1px solid; border-color: #eee #808080 #808080 #eee; }
.drop::after { content: ""; position: absolute; left: 3px; top: 5px; border: 3.500px solid transparent; border-top: 4px solid #000; }
.activate { margin: 25px 0 0 8px; width: 166px; height: 23px; border: 1px solid #000; border-right: 2px solid #404040; border-bottom: 2px solid #404040; background: #c8c8c8; display: flex; align-items: center; font-size: 12px; box-shadow: inset 1px 1px 0 #eee; }
.led { width: 14px; height: 14px; margin-left: 3px; border-radius: 50%; background: radial-gradient(circle at 40% 35%, #a0ffa0 0 15%, #00f000 30%); border: 1px solid #202020; flex: none; }
.activate span { margin-left: 15px; }

.d-body { flex: 1; min-height: 0; display: flex; }
.sidenav { width: 154px; margin: 2px 0 1px 3px; flex: none; background: #336699; border: 1px solid #000; outline: 1px solid #eee; display: flex; flex-direction: column; }
.nv { height: 20px; flex: none; display: flex; align-items: center; color: #fff; font-size: 12px; white-space: nowrap; }
.nv:first-child { margin-top: -1px; }
.nv svg { width: 20px; height: 20px; flex: none; }
.nv span { margin-left: 5px; }
.nv.sub { padding-left: 23px; }
.nv.sub span { margin-left: 3px; padding: 0 3px; line-height: 20px; height: 20px; width: 46px; }
.nv.sel span { background: #c8c8c8; color: #000; }
.nv u { font: 700 13px "Liberation Serif", serif; text-decoration: none; }

.panel { flex: 1; min-width: 0; margin-left: 8px; border-left: 1px solid #eee; display: flex; flex-direction: column; }
.trade { height: 229px; flex: none; display: flex; padding-left: 24px; }
.form { width: 201px; position: relative; }
.f-title { margin: 0; height: 43px; padding-top: 7px; font: 700 18px/26px "Noto Sans CJK SC", serif; letter-spacing: 3px; color: #f01010; white-space: nowrap; }
.f-row { height: 18px; display: grid; grid-template-columns: 57px 82px auto; align-items: center; color: #000; line-height: 18px; white-space: nowrap; }
.f-row label { font-size: 12px; }
.inp { height: 18px; background: #fff; border: 2px solid; border-color: #808080 #eee #eee #808080; font: 12px/14px "Liberation Sans", sans-serif; padding-left: 1px; display: flex; }
.inp span { flex: 1; }
.inp.red { color: #f00000; letter-spacing: .5px; }
.ro { padding-left: 0; }
.ro.num { font: 12px "Liberation Sans", sans-serif; }
.ref { margin-left: 7px; }
.sp { width: 14px; margin: -2px -2px -2px 0; display: flex; flex-direction: column; background: #c8c8c8; }
.sp i { height: 9px; border: 1px solid; border-color: #eee #808080 #808080 #eee; position: relative; }
.sp i::after { content: ""; position: absolute; left: 3px; top: 2px; border: 2.500px solid transparent; border-top: 0; border-bottom: 3px solid #000; }
.sp i + i::after { border-bottom: 0; border-top: 3px solid #000; }
.f-btns { display: flex; gap: 21px; margin-top: 6px; }
.btn { width: 59px; height: 20px; border: 1px solid; border-color: #eee #505050 #505050 #eee; text-align: center; line-height: 18px; color: #000; }
.btn u { text-decoration: underline; }
.ring { display: block; width: 10px; height: 10px; margin: 11px 0 0 128px; border-radius: 50%; border: 1px solid #f00000; }
.book { width: 216px; height: 180px; margin-top: 24px; border: 1px solid #606060; align-self: flex-start; flex: none; }
.bk-sec { padding: 1px 0; border-bottom: 1px solid #606060; height: 71px; }
.bk-one { height: 19px; padding: 0; display: flex; align-items: center; }
.bk-last { border-bottom: 0; height: 18px; }
.bk-sec:nth-child(3) { height: 72px; }
.bk-one .bk { width: 100%; height: 18px; }
.bk { height: 13.500px; line-height: 13.500px; display: grid; grid-template-columns: 32px 45px 69px 59px; padding-left: 5px; align-items: center; color: #000; font-size: 12px; }
.bk .p, .bk .n { text-align: right; font: 12px "Liberation Sans", sans-serif; letter-spacing: .5px; }
.mid { text-align: right; }
.blue { color: #0000a0 !important; }
.redt { color: #f00000; }
.bar { height: 8px; background: #f00000; justify-self: end; }
.b2 { width: 12px; } .b5 { width: 30px; } .b6 { width: 36px; } .b10 { width: 60px; }

.dtabs { height: 19px; flex: none; display: flex; align-items: flex-end; padding-left: 1px; }
.dtab { width: 93px; height: 16px; margin-right: 3px; border: 1px solid; border-color: #eee #808080 #eee #eee; border-radius: 2px 2px 0 0; text-align: center; line-height: 15px; font-size: 12px; color: #000; }
.dtab.on { width: 98px; height: 19px; margin-right: 0; line-height: 17px; }
.dtab.t3 { width: 96px; }
.dtable { flex: 1; min-height: 0; margin: 2px 2px 1px 2px; border: 1px solid; border-color: #808080 #eee #eee #808080; background: #fff; display: flex; flex-direction: column; overflow: hidden; }
.t-head, .t-row { display: grid; grid-template-columns: 72px 84px 73px 73px 74px 68px 1fr; flex: none; white-space: nowrap; overflow: hidden; }
.t-head { height: 17px; line-height: 16px; color: #000; background: #c8c8c8; }
.t-head span { padding-left: 5px; border: 1px solid; border-color: #eee #606060 #606060 #eee; }
.t-row { height: 18px; line-height: 18px; color: #f00000; border-bottom: 1px solid #a0a0a0; font-family: "Liberation Sans", "Noto Sans CJK SC", sans-serif; }
.t-row span { padding-left: 4px; border-right: 1px solid #a0a0a0; }
.t-head span:nth-child(5), .t-row span:nth-child(5) { padding-left: 15px; }
.t-head span:nth-child(6), .t-row span:nth-child(6) { padding-left: 13px; }
.t-row span:last-child { padding-left: 3px; border-right: 0; }
.t-fill { flex: 1; }
.hscroll { height: 17px; flex: none; display: flex; background: #c8dcf0; }
.sb-btn { width: 17px; background: #c0d0e8; border: 1px solid #8098c0; color: #203880; font: 700 14px/13px "Liberation Sans", sans-serif; text-align: center; }
.sb-thumb { flex: 1; display: block; padding-right: 149px; background: #c8d8ec; }
.sb-thumb i { display: block; height: 100%; background: linear-gradient(#c8e0f8, #90c4f0 50%, #a8d0f4); border: 1px solid #7090c0; border-radius: 2px; }
.d-status { height: 21px; flex: none; display: grid; grid-template-columns: 127px 69px 56px 55px 81px 55px 81px 31px 51px 16px; padding: 1px 0 1px 1px; align-items: stretch; position: relative; }
.sc { margin-right: 4px; border: 1px solid #eee; white-space: nowrap; overflow: hidden; line-height: 17px; color: #000; }
.sc.txt { padding-left: 1px; background: #d0d0d0; }
.sc.ctr { text-align: center; padding-left: 0; }
.sc.amt { font: 11px/17px "Liberation Sans", sans-serif; background: #e0e0e0; }
.sc.blank { background: #fff; border-color: #d8d8d8; }
.leds { display: flex; gap: 3px; align-items: center; padding-left: 3px; margin-right: 5px; }
.leds i { width: 9px; height: 9px; background: #009c00; }
.grip { background: linear-gradient(135deg, transparent 40%, #fff 40% 50%, #808080 50% 60%, transparent 60% 70%, #fff 70% 80%, #808080 80%); }
```
FILE: chart.js
```js
(function () {
  var NS = 'http://www.w3.org/2000/svg';
  function add(parent, tag, attrs) {
    var el = document.createElementNS(NS, tag);
    for (var k in attrs) el.setAttribute(k, attrs[k]);
    parent.appendChild(el);
    return el;
  }
  function line(parent, pts, fx, fy, color) {
    var s = pts.map(function (p) { return fx(p[0]).toFixed(1) + ',' + fy(p[1]).toFixed(1); }).join(' ');
    add(parent, 'polyline', { points: s, fill: 'none', stroke: color, 'stroke-width': 1, 'shape-rendering': 'crispEdges' });
  }
  var RED = '#ff3232', CYAN = '#2cf8f8', GREEN = '#00c000';

  /* volume bars: positive = hollow red, negative = solid cyan */
  var vol = [-7,5,6,-6,5,-9,9,7,7,7,7,-7,6,13,27,-13,12,52,-47,-20,16,-16,10,20,-10,18,30,28,-18,-15,16,20,16,36,-28,44,40,27,-19,27,-22,-22,19,24,-27,-22,24,34,49,-47,-36,31,31,-20,-20,67,-52,-27,19,-16,32,-24,22,-20,27,38,-35,41,-56,
    35,38,44,-28,28,57,49,63,55,-44,-32,24,-30,49,26,-21,29,24,35,44,-46,-38,20,16,21,23,31,40,59,48,54,-42,-31,37,-39,37,-31,41,38,-45,29,34,57,69,-75,-63,-37,39,27,-34,33,-38,37,44,-38,44,71,68,67,-49,-51,-38,-17,55,-42,42,-41,-42,48,39,-36,33,43,90,-59,33,-37];
  var gv = document.getElementById('c-vol');
  vol.forEach(function (h, i) {
    var x = 70 + 6 * i;
    if (h > 0) add(gv, 'rect', { x: x + 0.5, y: 557 - h + 0.5, width: 4, height: h, fill: 'none', stroke: RED, 'shape-rendering': 'crispEdges' });
    else add(gv, 'rect', { x: x, y: 557 + h, width: 5, height: -h, fill: CYAN });
  });
  /* volume averages, sampled from two overlapping views */
  var z7x = function (v) { return v / 2.45; }, z7y = function (v) { return 445 + v / 3; };
  var z11x = function (v) { return 480 + v / 3; }, z11y = function (v) { return 450 + v / 3; };
  line(gv, [[178,310],[240,313],[340,316],[370,312],[400,303],[420,295],[450,277],[510,268],[560,268],[590,282],[640,282],[690,262],[720,258],[800,254],[830,256],[860,268],[900,250],[960,245],[1000,224],[1060,244],[1120,248],[1150,260],[1200,240],[1250,222],[1300,202],[1340,205],[1380,208],[1400,214],[1440,232],[1490,236],[1568,245]], z7x, z7y, '#fff');
  line(gv, [[178,305],[190,313],[230,320],[300,313],[350,316],[380,300],[410,295],[430,262],[445,248],[485,248],[510,288],[530,298],[600,271],[650,288],[690,262],[720,233],[750,240],[790,270],[850,268],[880,250],[910,225],[940,220],[970,250],[1000,222],[1040,230],[1070,268],[1110,270],[1150,240],[1180,215],[1225,207],[1250,235],[1290,205],[1325,178],[1380,230],[1420,245],[1455,255],[1490,228],[1520,232],[1568,270]], z7x, z7y, '#ffff30');
  line(gv, [[480,229],[540,218],[600,208],[640,197],[700,205],[750,213],[800,190],[860,176],[940,182],[990,208],[1040,190],[1085,170],[1130,172],[1190,172],[1230,193],[1290,203],[1320,200],[1345,182],[1385,184]], z11x, z11y, '#fff');
  line(gv, [[480,255],[490,257],[530,205],[575,175],[610,200],[670,215],[720,205],[760,208],[800,175],[830,143],[860,147],[890,190],[920,220],[955,222],[1000,205],[1050,155],[1100,138],[1140,188],[1200,205],[1230,192],[1300,205],[1340,170],[1385,163]], z11x, z11y, '#ffff30');

  /* MACD histogram */
  var macd = [-5,-5,-5,-5,-4,-4,-3,-3,-3,-1,-1,-1,0,0,1,3,5,6,6,6,6,6,6,6,6,6,6,5,5,5,2,2,2,2,3,6,9,9,9,9,10,7,6,6,5,4,2,3,6,6,5,4,3,1,-1,-1,-2,-7,-8,-9,-7,-5,-4,-3,-1,0,1,4,2,
    2,2,2,2,1,2,4,8,12,12,11,9,7,7,6,4,3,2,2,2,0,-2,-5,-6,-7,-6,-5,-3,1,5,12,15,15,16,17,17,11,11,14,15,15,15,17,26,29,25,19,14,9,-1,-1,-3,-4,-3,-3,-3,1,5,8,1,-11,-27,-42,-50,-55,-50,-43,-38,-29,-20,-17,-12,-6,4,5,5,-2];
  var gm = document.getElementById('c-macd');
  macd.forEach(function (h, i) {
    if (!h) return;
    var x = 72 + 6 * i;
    add(gm, 'rect', { x: x, y: h > 0 ? 637 - h : 638, width: 1, height: Math.abs(h), fill: h > 0 ? RED : GREEN });
  });
  var z10x = function (v) { return v / 3; }, z10y = function (v) { return 550 + v / 3; };
  line(gm, [[216,264],[240,266],[310,268],[400,270],[470,266],[560,250],[680,244],[750,238],[800,238],[860,230],[900,218],[960,212],[1020,209],[1075,203],[1180,207],[1230,215],[1260,230],[1310,234],[1400,228],[1430,221],[1440,223]], z10x, z10y, '#fff');
  line(gm, [[216,254],[260,260],[330,266],[400,268],[510,264],[600,255],[700,245],[800,241],[880,232],[960,218],[1050,213],[1090,207],[1180,208],[1260,218],[1340,227],[1440,226]], z10x, z10y, '#ffff30');
  line(gm, [[0,524],[60,520],[110,522],[170,492],[240,488],[380,488],[410,503],[450,513],[510,513],[580,470],[650,445],[670,450],[710,433],[760,425],[810,373],[880,373],[930,398],[1000,405],[1060,382],[1100,420],[1170,553],[1220,574],[1250,573],[1300,568],[1340,540],[1370,538],[1385,550]], z11x, z11y, '#fff');
  line(gm, [[0,524],[110,522],[220,495],[370,490],[460,505],[530,507],[650,468],[770,438],[850,396],[900,390],[1000,398],[1080,394],[1120,410],[1230,525],[1300,547],[1385,548]], z11x, z11y, '#ffff30');

  /* price candles: center, high, body top, body bottom, low, kind */
  var cs = [[18,808,812,822,825,'r'],[36,790,796,810,815,'r'],[54,765,782,804,810,'r'],[72,722,730,764,770,'r'],[90,697,707,722,750,'r'],[108,642,642,704,710,'r'],[126,616,644,646,660,'c'],[145,628,646,656,670,'c'],[163,612,619,653,656,'r'],[181,612,618,620,670,'c'],[199,578,584,618,640,'r'],[217,592,623,653,660,'c'],[235,580,586,640,645,'r'],[253,520,532,575,578,'r'],[271,472,508,518,545,'c'],[289,514,532,535,565,'r'],[307,478,490,526,558,'r'],[325,408,421,475,480,'r'],[343,328,328,416,416,'r'],[361,250,300,324,328,'c'],[379,340,340,368,422,'c'],[397,362,378,386,418,'c'],[415,340,370,388,416,'r'],[433,352,385,391,404,'r'],[451,370,385,446,458,'c'],[469,366,370,452,460,'r'],[487,350,364,372,378,'c'],[505,328,358,370,392,'r'],[523,300,322,384,390,'r'],[541,300,318,320,372,'c'],[559,306,316,318,372,'r'],[577,212,235,296,304,'r'],[595,178,220,223,248,'r'],[613,140,172,220,234,'r'],[631,205,288,290,290,'c'],[649,322,322,392,392,'c'],[667,376,408,488,488,'c'],[685,504,540,572,572,'c'],[703,570,570,650,650,'r'],[721,550,570,590,632,'c'],[739,522,522,586,612,'r'],[757,490,505,508,538,'c'],[775,450,484,500,520,'c'],[793,450,460,496,552,'r'],[811,402,436,456,480,'r'],[829,436,436,474,474,'c'],[847,450,458,494,505,'r'],[865,405,417,433,450,'r'],[883,324,324,380,380,'r'],[901,326,326,395,408,'c'],[919,370,405,407,422,'r'],[937,393,423,503,503,'c']];
  var gp = document.getElementById('c-price');
  var px = function (v) { return 630 + v / 3; }, py = function (v) { return 40 + v / 3; };
  cs.forEach(function (c) {
    var cx = Math.round(px(c[0])), hi = Math.round(py(c[1])), t = Math.round(py(c[2])), b = Math.round(py(c[3])), lo = Math.round(py(c[4]));
    var col = c[5] === 'r' ? RED : CYAN;
    add(gp, 'rect', { x: cx, y: hi, width: 1, height: Math.max(lo - hi, 1), fill: col });
    if (c[5] === 'r') add(gp, 'rect', { x: cx - 2 + 0.5, y: t + 0.5, width: 4, height: Math.max(b - t - 1, 1), fill: '#000', stroke: col, 'shape-rendering': 'crispEdges' });
    else add(gp, 'rect', { x: cx - 2, y: t, width: 5, height: Math.max(b - t, 1), fill: col });
  });
  line(gp, [[10,858],[70,843],[140,805],[220,760],[290,725],[350,670],[420,610],[520,540],[580,470],[640,428],[700,418],[800,403],[900,401],[935,408]], px, py, '#00c000');
  line(gp, [[10,927],[80,910],[170,880],[320,820],[430,760],[520,710],[640,630],[700,612],[850,560],[935,524]], px, py, '#00c8c8');
  line(gp, [[10,815],[60,810],[130,770],[210,740],[290,690],[330,630],[370,570],[410,530],[460,490],[560,420],[600,375],[640,347],[675,347],[720,380],[800,405],[860,415],[900,415],[935,428]], px, py, '#ff80ff');
  line(gp, [[10,810],[60,808],[100,780],[150,730],[190,675],[240,635],[280,597],[320,560],[350,510],[390,450],[420,415],[470,388],[530,370],[560,365],[600,330],[635,298],[660,305],[700,365],[740,415],[780,480],[810,505],[835,513],[860,505],[890,465],[915,440],[935,438]], px, py, '#ffff30');
  line(gp, [[10,825],[50,805],[80,775],[110,705],[140,670],[180,630],[230,620],[260,585],[290,567],[320,525],[350,450],[380,385],[400,360],[420,355],[450,390],[490,392],[530,360],[560,340],[600,290],[625,248],[640,250],[655,270],[680,360],[700,450],[720,520],[750,557],[775,540],[800,500],[830,478],[860,455],[880,420],[920,405],[935,410]], px, py, '#fff');
})();
```
